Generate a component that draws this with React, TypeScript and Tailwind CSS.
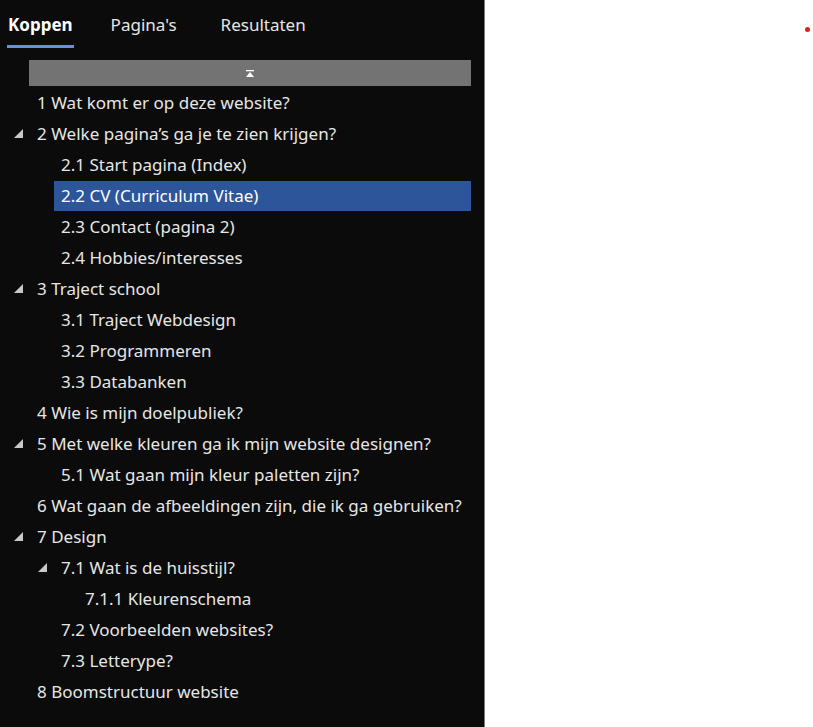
import React from 'react';

type Item = { label: string; level: 0 | 1 | 2; open?: boolean; selected?: boolean };

const ITEMS: Item[] = [
  { label: '1 Wat komt er op deze website?', level: 0 },
  { label: '2 Welke pagina’s ga je te zien krijgen?', level: 0, open: true },
  { label: '2.1 Start pagina (Index)', level: 1 },
  { label: '2.2 CV (Curriculum Vitae)', level: 1, selected: true },
  { label: '2.3 Contact (pagina 2)', level: 1 },
  { label: '2.4 Hobbies/interesses', level: 1 },
  { label: '3 Traject school', level: 0, open: true },
  { label: '3.1 Traject Webdesign', level: 1 },
  { label: '3.2 Programmeren', level: 1 },
  { label: '3.3 Databanken', level: 1 },
  { label: '4 Wie is mijn doelpubliek?', level: 0 },
  { label: '5 Met welke kleuren ga ik mijn website designen?', level: 0, open: true },
  { label: '5.1 Wat gaan mijn kleur paletten zijn?', level: 1 },
  { label: '6 Wat gaan de afbeeldingen zijn, die ik ga gebruiken?', level: 0 },
  { label: '7 Design', level: 0, open: true },
  { label: '7.1 Wat is de huisstijl?', level: 1, open: true },
  { label: '7.1.1 Kleurenschema', level: 2 },
  { label: '7.2 Voorbeelden websites?', level: 1 },
  { label: '7.3 Letterype?', level: 1 },
  { label: '8 Boomstructuur website', level: 0 },
];

const indent = ['w-[30px]', 'w-[54px]', 'w-[78px]'];

const Caret = () => (
  <svg width="9" height="9" viewBox="0 0 9 9">
    <polygon points="9,0 9,9 0,9" fill="#c8c8c8" />
  </svg>
);

const Row: React.FC<{ item: Item }> = ({ item }) => (
  <div className="flex items-center h-[31px]">
    <div className={`${indent[item.level]} shrink-0 flex justify-end pr-[7px]`}>
      {item.open && <Caret />}
    </div>
    <div
      className={`flex-1 mr-[13px] h-[30px] flex items-center pl-[7px] whitespace-nowrap ${
        item.selected ? 'bg-[#2c5699] text-white' : 'text-[#e6e6e6]'
      }`}
    >
      {item.label}
    </div>
  </div>
);

export default function App() {
  return (
    <div className="flex w-[813px] h-[727px] bg-white" style={{ fontFamily: '"Noto Sans", "Open Sans", sans-serif' }}>
      <div className="w-[485px] h-full bg-[#0b0b0b] border-r border-[#7a7a7a] text-[17px] overflow-hidden">
        <div className="flex h-[49px] pl-[7px]">
          <div className="relative flex items-center h-full px-[1px] text-white font-bold">
            Koppen
            <div className="absolute left-0 right-0 bottom-[1px] h-[3px] bg-[#6a90d8]" />
          </div>
          <div className="flex items-center h-full ml-[37px] text-[#e6e6e6]">Pagina's</div>
          <div className="flex items-center h-full ml-[44px] text-[#e6e6e6]">Resultaten</div>
        </div>
        <div className="ml-[29px] mr-[13px] mt-[11px] h-[26px] bg-[#737373] flex items-center justify-center">
          <svg width="8" height="7" viewBox="0 0 8 7">
            <rect x="0" y="0" width="8" height="1.3" fill="#fff" />
            <polygon points="4,2 8,7 0,7" fill="#fff" />
          </svg>
        </div>
        <div className="mt-[1px]">
          {ITEMS.map((it, i) => (
            <Row key={i} item={it} />
          ))}
        </div>
      </div>
      <div className="flex-1 relative">
        <div className="absolute left-[320px] top-[27px] w-[5px] h-[5px] rounded-full bg-[#e02020]" />
      </div>
    </div>
  );
}
